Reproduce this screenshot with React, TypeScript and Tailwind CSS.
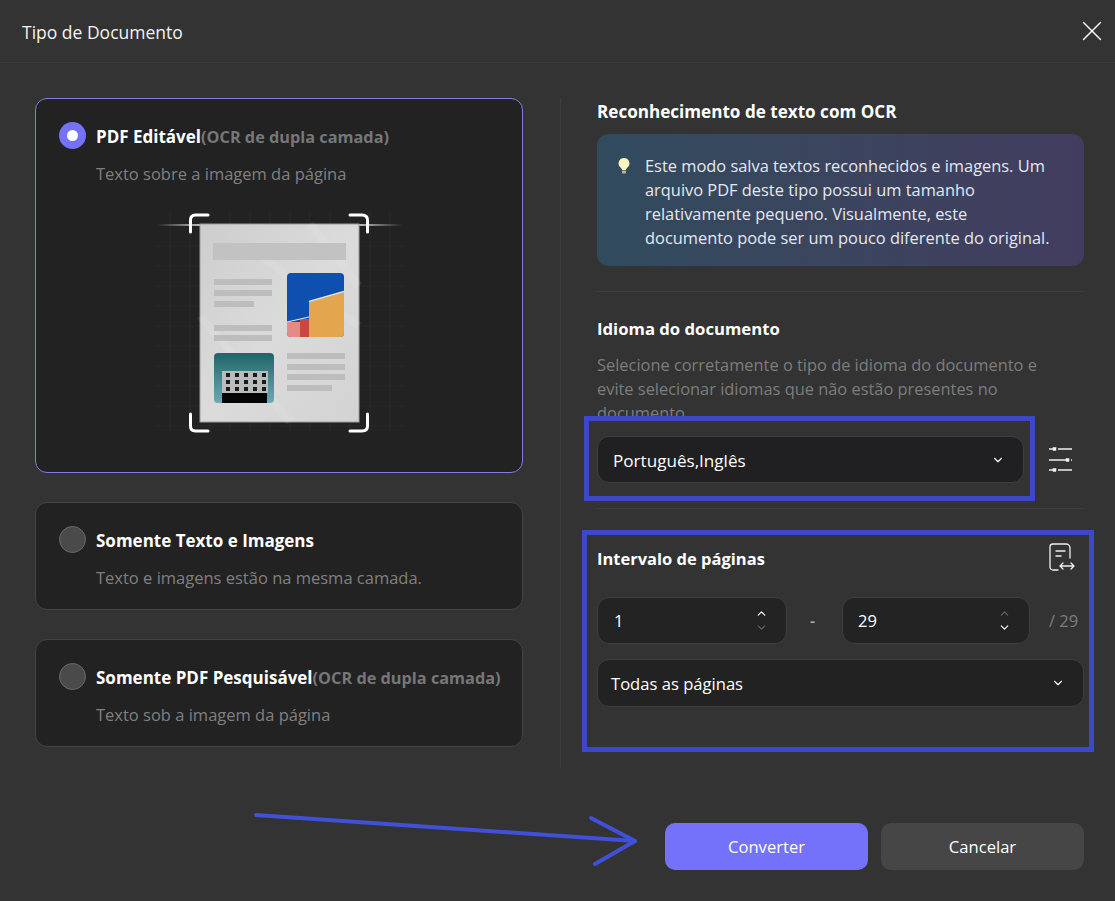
import { ChevronDown, ChevronUp, X } from "lucide-react";

const font = { fontFamily: '"Open Sans", "Noto Sans", sans-serif' };

function Radio({ checked }: { checked?: boolean }) {
  if (checked) {
    return (
      <div className="flex h-[27px] w-[27px] shrink-0 items-center justify-center rounded-full bg-[#7472f8]">
        <div className="h-[11px] w-[11px] rounded-full bg-white" />
      </div>
    );
  }
  return <div className="h-[27px] w-[27px] shrink-0 rounded-full border border-[#6a6a6a] bg-[#4a4a4a]" />;
}

function PaperArt() {
  return (
    <svg width="280" height="250" viewBox="0 0 280 250" className="block">
      <defs>
        <linearGradient id="flare" x1="0" x2="1" y1="0" y2="0">
          <stop offset="0" stopColor="#fff" stopOpacity="0" />
          <stop offset="0.2" stopColor="#fff" stopOpacity="0.8" />
          <stop offset="0.8" stopColor="#fff" stopOpacity="0.8" />
          <stop offset="1" stopColor="#fff" stopOpacity="0" />
        </linearGradient>
        <linearGradient id="paper" x1="0" x2="1" y1="0" y2="1">
          <stop offset="0" stopColor="#cdcdce" />
          <stop offset="0.5" stopColor="#dbdbdc" />
          <stop offset="1" stopColor="#d3d3d4" />
        </linearGradient>
        <linearGradient id="teal" x1="0" x2="0" y1="0" y2="1">
          <stop offset="0" stopColor="#1f6468" />
          <stop offset="1" stopColor="#6fa9b3" />
        </linearGradient>
        <clipPath id="pic1"><rect x="147" y="77" width="57" height="64" rx="4" /></clipPath>
        <clipPath id="pic2"><rect x="74" y="157" width="60" height="50" rx="4" /></clipPath>
        <filter id="soft"><feGaussianBlur stdDeviation="0.7" /></filter>
      </defs>
      {[30, 50, 70, 90, 110, 130, 150, 170, 190, 210, 230, 250].map((x) => (
        <line key={`v${x}`} x1={x} x2={x} y1="15" y2="235" stroke="#fff" strokeOpacity="0.035" />
      ))}
      {[50, 70, 90, 110, 130, 150, 170, 190, 210, 230].map((y) => (
        <line key={`h${y}`} x1="15" x2="265" y1={y} y2={y} stroke="#fff" strokeOpacity="0.035" />
      ))}
      <rect x="17" y="28" width="245" height="2" fill="url(#flare)" />
      <rect x="60" y="28" width="159" height="198" fill="url(#paper)" stroke="#9d9d9d" />
      <path d="M120 60 L219 130 M60 120 L150 226 M170 28 L219 90" stroke="#fff" strokeOpacity="0.08" strokeWidth="8" />
      <g filter="url(#soft)">
        <rect x="73" y="47" width="133" height="17" fill="#c2c2c3" />
        <g fill="#bdbdbe">
          <rect x="74" y="83" width="58" height="6" />
          <rect x="74" y="94" width="58" height="6" />
          <rect x="74" y="105" width="40" height="6" />
          <rect x="74" y="129" width="58" height="6" />
          <rect x="74" y="139" width="58" height="6" />
          <rect x="147" y="157" width="58" height="6" />
          <rect x="147" y="168" width="58" height="6" />
          <rect x="147" y="178" width="58" height="6" />
          <rect x="147" y="189" width="45" height="6" />
        </g>
      </g>
      <g clipPath="url(#pic1)">
        <rect x="147" y="77" width="57" height="64" fill="#0f4fb0" />
        <path d="M169 106 L204 96 V141 H169 Z" fill="#e3a64e" />
        <path d="M169 105.5 L204 95.5" stroke="#dfe3ea" strokeWidth="1.5" />
        <rect x="147" y="126" width="13" height="15" fill="#e58a85" />
        <rect x="160" y="123" width="9" height="18" fill="#c74a3f" />
        <path d="M147 126 L169 121" stroke="#dfe3ea" strokeWidth="1.2" />
      </g>
      <g clipPath="url(#pic2)">
        <rect x="74" y="157" width="60" height="50" fill="url(#teal)" />
        <rect x="82" y="175" width="46" height="22" fill="#b9bcbc" />
        {[86, 95, 104, 113, 122].flatMap((x) =>
          [177, 184, 191].map((y) => <rect key={`${x}-${y}`} x={x} y={y} width="4" height="4" fill="#1a1a1a" />),
        )}
        <rect x="82" y="197" width="45" height="10" fill="#050505" />
      </g>
      <g fill="none" stroke="#fff" strokeWidth="3" strokeLinecap="round">
        <path d="M50.5 36 V24 Q50.5 19 55.5 19 H68" />
        <path d="M210 19 H222 Q227.5 19 227.5 24 V36" />
        <path d="M50.5 218 V230 Q50.5 235 55.5 235 H68" />
        <path d="M210 235 H222 Q227.5 235 227.5 230 V218" />
      </g>
    </svg>
  );
}

function Card({
  title,
  note,
  sub,
  active,
  children,
}: {
  title: string;
  note?: string;
  sub: string;
  active?: boolean;
  children?: React.ReactNode;
}) {
  return (
    <div
      className={`rounded-xl border bg-[#222222] pl-[23px] pt-[23px] ${
        active ? "h-[375px] border-[#7f7de8]" : "h-[108px] border-[#454545]"
      }`}
    >
      <div className="flex items-center gap-[10px]">
        <Radio checked={active} />
        <p className="whitespace-nowrap pt-[2px] text-[17px] font-bold text-white">
          {title}
          {note && <span className="text-[16.3px] text-[#777777]">{note}</span>}
        </p>
      </div>
      <p className="ml-[37px] mt-[12px] text-[16.5px] leading-6 text-[#808080]">{sub}</p>
      {children}
    </div>
  );
}

export default function App() {
  return (
    <div className="relative h-[901px] w-[1115px] overflow-hidden bg-[#333333] text-white" style={font}>
      <header className="flex h-[63px] items-center justify-between border-b border-[#3a3a3a] pl-[22px] pr-[6px]">
        <h1 className="pt-[2px] text-[17.5px] text-[#f2f2f2]">Tipo de Documento</h1>
        <X size={34} strokeWidth={1} className="text-white" />
      </header>

      <div className="flex pl-[35px] pt-[35px]">
        <div className="flex w-[488px] flex-col gap-[29px]">
          <Card active title="PDF Editável" note="(OCR de dupla camada)" sub="Texto sobre a imagem da página">
            <div className="ml-[81px] mt-[10px]">
              <PaperArt />
            </div>
          </Card>
          <Card title="Somente Texto e Imagens" sub="Texto e imagens estão na mesma camada." />
          <Card title="Somente PDF Pesquisável" note="(OCR de dupla camada)" sub="Texto sob a imagem da página" />
        </div>

        <div className="ml-[37px] h-[670px] w-px bg-[#3d3d3d]" />

        <div className="ml-[36px] w-[487px]">
          <h2 className="mt-[2px] text-[17.1px] font-bold leading-6">Reconhecimento de texto com OCR</h2>
          <div className="mt-[10px] flex h-[132px] rounded-xl bg-gradient-to-r from-[#314b5d] to-[#423d5f] pl-[21px] pt-[20px]">
            <svg width="12" height="17" viewBox="1 0 12 17" className="mt-[3px] shrink-0">
              <path d="M7 1a5.4 5.4 0 0 0-3 9.9c.7.5 1 1.2 1 2h4c0-.8.3-1.5 1-2A5.4 5.4 0 0 0 7 1Z" fill="#fdf3c0" />
              <rect x="5" y="13.5" width="4" height="3" rx="1" fill="#b9b6a2" />
            </svg>
            <p className="ml-[15px] w-[412px] text-[16.4px] leading-6 text-[#e4e8f0]">
              Este modo salva textos reconhecidos e imagens. Um arquivo PDF deste tipo possui um tamanho relativamente
              pequeno. Visualmente, este documento pode ser um pouco diferente do original.
            </p>
          </div>
          <div className="mt-[25px] h-px bg-[#3d3d3d]" />

          <h2 className="mt-[25px] text-[16.7px] font-bold leading-6">Idioma do documento</h2>
          <div className="mt-[12px] h-[66px] overflow-hidden">
            <p className="w-[445px] text-[16.4px] leading-6 text-[#7d7d7d]">
              Selecione corretamente o tipo de idioma do documento e evite selecionar idiomas que não estão presentes no
              documento.
            </p>
          </div>
          <div className="mt-[17px] flex items-center">
            <div className="flex h-[47px] w-[427px] items-center justify-between rounded-xl border border-[#3f3f3f] bg-[#201f21] pl-[15px] pr-[18px]">
              <span className="pt-[2px] text-[17.1px]">Português,Inglês</span>
              <ChevronDown size={14} strokeWidth={2} />
            </div>
            <svg width="26" height="28" viewBox="0 0 26 28" className="ml-[24px]" fill="none" stroke="#f0f0f0" strokeWidth="1.4">
              <path d="M1 3h4M10 3h14M1 14h17M23 14h1M1 24h4M10 24h14" />
              <rect x="5" y="1.5" width="3" height="3" fill="#f0f0f0" strokeWidth="0.5" />
              <rect x="18" y="12.5" width="3" height="3" fill="#f0f0f0" strokeWidth="0.5" />
              <rect x="5" y="22.5" width="3" height="3" fill="#f0f0f0" strokeWidth="0.5" />
            </svg>
          </div>
          <div className="mt-[25px] h-px bg-[#3d3d3d]" />

          <div className="mt-[38px] flex items-center justify-between pr-[8px]">
            <h2 className="text-[16.5px] font-bold leading-6">Intervalo de páginas</h2>
            <svg width="28" height="28" viewBox="0 0 28 28" className="-my-[4px] -translate-y-[2px]" fill="none" stroke="#f0f0f0" strokeWidth="1.3" strokeLinecap="round" strokeLinejoin="round">
              <path d="M10 27H5a3 3 0 0 1-3-3V4a3 3 0 0 1 3-3h13a4 4 0 0 1 4 4v10" />
              <path d="M8 8h9M8 13h5" />
              <path d="M12 23h14M15 20l-3 3 3 3M23 20l3 3-3 3" />
            </svg>
          </div>

          <div className="mt-[26px] flex items-center">
            <div className="flex h-[47px] w-[190px] items-center justify-between rounded-xl border border-[#3f3f3f] bg-[#222322] pl-[16px] pr-[18px]">
              <span className="pt-[2px] text-[16.5px]">1</span>
              <div className="flex flex-col gap-[1px]">
                <ChevronUp size={13} strokeWidth={2} className="text-white" />
                <ChevronDown size={13} strokeWidth={2} className="text-[#666666]" />
              </div>
            </div>
            <span className="w-[55px] pr-[4px] text-center text-[16px] font-semibold text-[#aaaaaa]">-</span>
            <div className="flex h-[47px] w-[188px] items-center justify-between rounded-xl border border-[#3f3f3f] bg-[#222322] pl-[15px] pr-[18px]">
              <span className="pt-[2px] text-[16.5px]">29</span>
              <div className="flex flex-col gap-[1px]">
                <ChevronUp size={13} strokeWidth={2} className="text-[#666666]" />
                <ChevronDown size={13} strokeWidth={2} className="text-white" />
              </div>
            </div>
            <span className="ml-[19px] pt-[2px] text-[16.5px] text-[#7d7d7d]">/ 29</span>
          </div>

          <div className="mt-[15px] flex h-[48px] items-center justify-between rounded-xl border border-[#3f3f3f] bg-[#212221] pl-[13px] pr-[18px]">
            <span className="pt-[3px] text-[16.6px]">Todas as páginas</span>
            <ChevronDown size={14} strokeWidth={2} />
          </div>
        </div>
      </div>

      <div className="absolute bottom-[31px] right-[31px] flex gap-[13px]">
        <button className="h-[47px] w-[203px] rounded-[10px] bg-[#7472fb] pt-[2px] text-[16.6px] text-white">Converter</button>
        <button className="h-[47px] w-[203px] rounded-[10px] bg-[#464646] pt-[2px] text-[16.6px] text-white">Cancelar</button>
      </div>

      {/* blue annotation marks */}
      <div className="absolute left-[584px] top-[416px] h-[85px] w-[451px] border-[5px] border-[#3c48c8]" />
      <div className="absolute left-[582px] top-[530px] h-[222px] w-[512px] border-[5px] border-[#3c48c8]" />
      <svg width="400" height="60" viewBox="0 0 400 60" className="absolute left-[250px] top-[810px]" fill="none" stroke="#4150d8" strokeWidth="4" strokeLinecap="round" strokeLinejoin="round">
        <path d="M6 5 L385 31" />
        <path d="M341 8 L385 31 L345 54" />
      </svg>
    </div>
  );
}
